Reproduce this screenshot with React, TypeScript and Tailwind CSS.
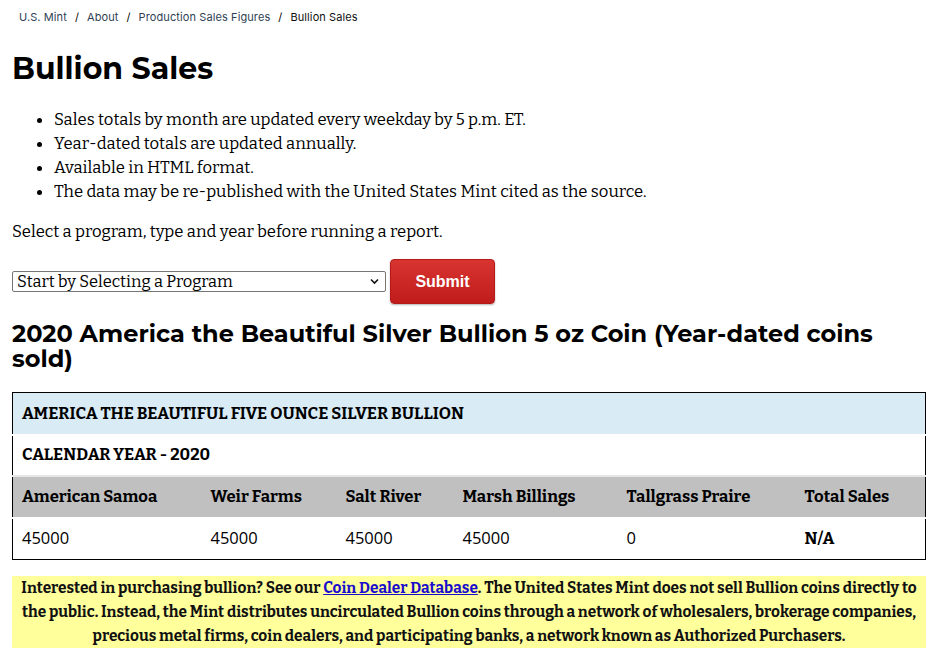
import React from "react";

const serif = "font-['Bitter','DejaVu_Serif_Condensed','DejaVu_Serif',serif]";

export default function App() {
  const cols = ["American Samoa", "Weir Farms", "Salt River", "Marsh Billings", "Tallgrass Praire", "Total Sales"];
  const vals = ["45000", "45000", "45000", "45000", "0"];
  const widths = ["w-[189px]", "w-[135px]", "w-[117px]", "w-[164px]", "w-[178px]", ""];
  return (
    <div className="bg-white text-black w-[940px] min-h-[662px] px-3">
      <nav className="pt-[10px] pl-[7px] text-[11px] leading-[14px] font-['Inter','Noto_Sans',sans-serif] text-[#2f3f55] flex items-center tracking-[0.1px]">
        <span>U.S. Mint</span>
        <span className="mx-[8px] text-black">/</span>
        <span>About</span>
        <span className="mx-[8px] text-black">/</span>
        <span>Production Sales Figures</span>
        <span className="mx-[8px] text-black">/</span>
        <span className="text-[#111]">Bullion Sales</span>
      </nav>
      <h1 className="mt-[27px] text-[30px] leading-[36px] font-bold font-['Montserrat','Inter',sans-serif]">
        Bullion Sales
      </h1>
      <ul className={`mt-[20px] ${serif} text-[16.7px] leading-[24px] list-disc pl-[42px]`}>
        <li>Sales totals by month are updated every weekday by 5 p.m. ET.</li>
        <li>Year-dated totals are updated annually.</li>
        <li>Available in HTML format.</li>
        <li>The data may be re-published with the United States Mint cited as the source.</li>
      </ul>
      <p className={`mt-[16px] ${serif} text-[16.7px] leading-[24px]`}>Select a program, type and year before running a report.</p>
      <div className="mt-[16px] flex items-center gap-[4px]">
        <div className={`relative w-[374px] h-[21px] border border-[#767676] rounded-[2px] ${serif} text-[16.5px] leading-[19px] pl-[4px] bg-white`}>
          Start by Selecting a Program
          <svg className="absolute right-[6px] top-[6px]" width="9" height="7" viewBox="0 0 9 7">
            <path d="M1 1.5 L4.5 5 L8 1.5" stroke="#111" strokeWidth="1.6" fill="none" />
          </svg>
        </div>
        <button className="w-[105px] h-[45px] rounded-[4px] bg-[linear-gradient(#d83430,#c01c1c)] border border-[#b51a1a] shadow-[0_1px_2px_rgba(0,0,0,0.3)] text-white font-bold text-[16px] font-['Liberation_Sans',Arial,sans-serif]">
          Submit
        </button>
      </div>
      <h2 className="mt-[17px] text-[24px] leading-[25px] font-bold font-['Montserrat','Inter',sans-serif]">
        2020 America the Beautiful Silver Bullion 5 oz Coin (Year-dated coins sold)
      </h2>
      <table className={`mt-[21px] w-[914px] border border-black border-collapse ${serif} text-[16.7px]`}>
        <tbody>
          <tr className="bg-[#d9ecf6] h-[42px] border-b-2 border-white">
            <td colSpan={6} className="px-[9px] font-bold">AMERICA THE BEAUTIFUL FIVE OUNCE SILVER BULLION</td>
          </tr>
          <tr className="bg-white h-[41px] border-b-2 border-[#e6e6e6]">
            <td colSpan={6} className="px-[9px] font-bold">CALENDAR YEAR - 2020</td>
          </tr>
          <tr className="bg-[#c0c0c0] h-[42px] border-b-2 border-white">
            {cols.map((c, i) => (
              <td key={c} className={`px-[9px] font-bold ${widths[i]}`}>{c}</td>
            ))}
          </tr>
          <tr className="bg-white h-[42px]">
            {vals.map((v, i) => (
              <td key={i} className="px-[9px] font-['Open_Sans','Noto_Sans',sans-serif] text-[16.5px]">{v}</td>
            ))}
            <td className="px-[9px] font-bold">N/A</td>
          </tr>
        </tbody>
      </table>
      <div className={`mt-[16px] w-[914px] bg-[#ffff9c] text-center ${serif} font-bold text-[15.4px] leading-[24px] px-[6px] text-[#111]`}>
        Interested in purchasing bullion? See our <a className="text-[#1a0dcc] underline">Coin Dealer Database</a>. The United States Mint does not sell Bullion coins directly to the public. Instead, the Mint distributes uncirculated Bullion coins through a network of wholesalers, brokerage companies, precious metal firms, coin dealers, and participating banks, a network known as Authorized Purchasers.
      </div>
    </div>
  );
}
